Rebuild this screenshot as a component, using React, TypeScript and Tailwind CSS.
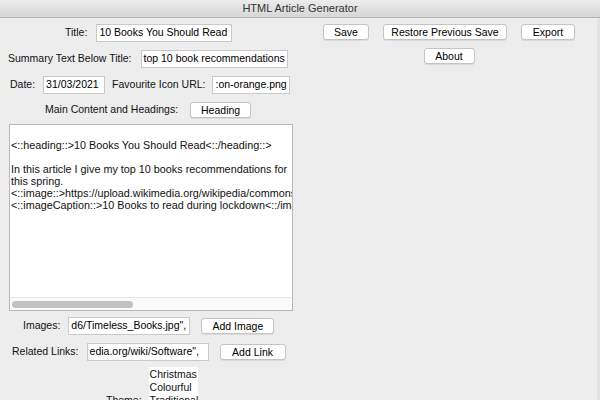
const font = { fontFamily: '"Liberation Sans", Arial, sans-serif' };

function Field({ value, className }: { value: string; className: string }) {
  return (
    <div
      className={`h-[18px] bg-white border border-[#c9c9c9] px-[2px] flex items-center overflow-hidden whitespace-nowrap text-[10.5px] text-black ${className}`}
    >
      {value}
    </div>
  );
}

function Btn({ label, className }: { label: string; className: string }) {
  return (
    <button
      className={`h-[16px] bg-white border border-[#c4c4c4] rounded-[3px] shadow-[0_1px_0_rgba(0,0,0,0.08)] flex items-center justify-center text-[10.5px] text-black leading-none ${className}`}
    >
      {label}
    </button>
  );
}

const lines = [
  "",
  "<::heading::>10 Books You Should Read<::/heading::>",
  "",
  "In this article I give my top 10 books recommendations for",
  "this spring.",
  "<::image::>https://upload.wikimedia.org/wikipedia/commons/thumb",
  "<::imageCaption::>10 Books to read during lockdown<::/imageCaption::>",
];

export default function App() {
  return (
    <div
      style={font}
      className="w-[600px] h-[400px] bg-[#ededed] overflow-hidden flex flex-col text-[10.5px] text-[#111]"
    >
      {/* window title bar */}
      <div className="h-[18px] shrink-0 bg-gradient-to-b from-[#ececec] to-[#d6d6d6] border-b border-[#b3b3b3] flex items-center justify-center text-[11px] text-[#333]">
        HTML Article Generator
      </div>

      <div className="flex flex-1 border-r-[3px] border-[#e2e2e2]">
        {/* left column: form */}
        <div className="w-[300px] shrink-0 flex flex-col">
          <div className="mt-[6px] flex items-center pl-[65px]">
            <span>Title:</span>
            <Field value="10 Books You Should Read" className="ml-[9px] w-[136px]" />
          </div>

          <div className="mt-[8px] flex items-center pl-[8px]">
            <span>Summary Text Below Title:</span>
            <Field value="top 10 book recommendations" className="ml-[9px] w-[147px]" />
          </div>

          <div className="mt-[8px] flex items-center pl-[10px]">
            <span>Date:</span>
            <Field value="31/03/2021" className="ml-[8px] w-[62px]" />
            <span className="ml-[7px]">Favourite Icon URL:</span>
            <Field value=":on-orange.png" className="ml-[7px] w-[78px]" />
          </div>

          <div className="mt-[8px] flex items-center pl-[45px]">
            <span>Main Content and Headings:</span>
            <Btn label="Heading" className="ml-[12px] w-[61px]" />
          </div>

          <div className="mt-[6px] ml-[9px] w-[284px] h-[187px] bg-white border border-[#b9b9b9] flex flex-col">
            <div className="flex-1 overflow-hidden pl-[1px] pt-[2px] text-[10.8px] leading-[12px] whitespace-pre">
              {lines.map((l, i) => (
                <div key={i} className="h-[12px]">
                  {l}
                </div>
              ))}
            </div>
            <div className="h-[13px] border-t border-[#e6e6e6] bg-[#fafafa] flex items-center px-[2px]">
              <div className="h-[7px] w-[121px] rounded-full bg-[#c2c2c2]" />
            </div>
          </div>

          <div className="mt-[6px] flex items-center pl-[23px]">
            <span>Images:</span>
            <Field value='d6/Timeless_Books.jpg",' className="ml-[8px] w-[122px]" />
            <Btn label="Add Image" className="ml-[11px] w-[73px]" />
          </div>

          <div className="mt-[8px] flex items-center pl-[12px]">
            <span>Related Links:</span>
            <Field value='edia.org/wiki/Software",' className="ml-[8px] w-[122px]" />
            <Btn label="Add Link" className="ml-[11px] w-[66px]" />
          </div>

          <div className="mt-[6px] flex items-end pl-[106px]">
            <span className="leading-[13px]">Theme:</span>
            <div className="ml-[7px] w-[49px] bg-white pl-[1px] pt-[1px] leading-[13px]">
              <div>Christmas</div>
              <div>Colourful</div>
              <div>Traditional</div>
            </div>
          </div>
        </div>

        {/* right column: actions */}
        <div className="flex-1 pt-[6px] pl-[23px]">
          <div className="w-fit flex flex-col items-center">
            <div className="flex gap-[14px]">
              <Btn label="Save" className="w-[46px]" />
              <Btn label="Restore Previous Save" className="w-[124px]" />
              <Btn label="Export" className="w-[54px]" />
            </div>
            <Btn label="About" className="mt-[8px] w-[51px]" />
          </div>
        </div>
      </div>
    </div>
  );
}
